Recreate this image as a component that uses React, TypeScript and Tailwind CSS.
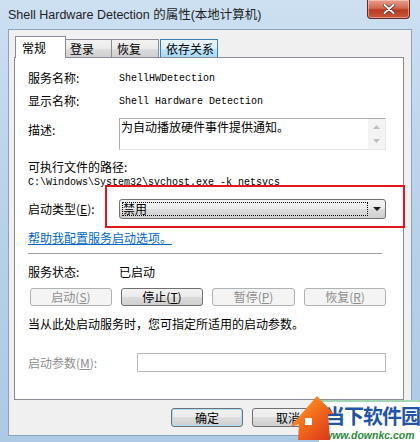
import React from "react";
import clsx from "clsx";

const btnNormal =
  "border-[#707070] bg-[linear-gradient(#f2f2f2_0%,#ebebeb_49%,#dddddd_50%,#cfcfcf_100%)] text-black";
const btnDisabled = "border-[#adb2b5] bg-[#f4f4f4] text-[#8d8d8d]";

const Btn = ({
  children,
  disabled,
  isDefault,
  className,
}: {
  children?: React.ReactNode;
  disabled?: boolean;
  isDefault?: boolean;
  className?: string;
}) => (
  <div
    className={clsx(
      "flex items-center justify-center rounded-[3px] border text-[12px] leading-[16px]",
      disabled ? btnDisabled : btnNormal,
      isDefault &&
        "border-[#3c7fb1] shadow-[inset_0_0_0_1px_#a8e0fb] bg-[linear-gradient(#eef7fc_0%,#e6f2fa_49%,#d5e9f6_50%,#c6e0f2_100%)]",
      className
    )}
  >
    {children}
  </div>
);

const Label = ({ children, className }: { children: React.ReactNode; className?: string }) => (
  <div className={clsx("w-[91px] shrink-0 text-[12px] leading-[16px]", className)}>{children}</div>
);

const App = () => {
  return (
    <div className="relative flex h-[442px] w-[420px] flex-col overflow-hidden bg-[linear-gradient(180deg,#cde0f2_0%,#bcd4ec_35%,#aec9e6_100%)] font-['Noto_Sans_CJK_SC','Liberation_Sans',sans-serif] text-black">
      {/* title bar */}
      <div className="flex h-[29px] shrink-0 items-start">
        <div className="pl-[8px] pt-[7px] font-['Liberation_Sans','Noto_Sans_CJK_SC',sans-serif] text-[12.5px] leading-[16px] text-[#1e1e1e]">
          Shell Hardware Detection 的属性(本地计算机)
        </div>
        <div className="ml-auto mr-[10px] flex h-[19px] w-[43px] items-center justify-center rounded-b-[4px] border border-t-0 border-[#5e2a2a] bg-[linear-gradient(180deg,#e5a08f_0%,#d26a52_45%,#b83c22_55%,#c9573a_100%)] shadow-[inset_0_0_0_1px_rgba(255,220,210,0.5)]">
          <svg width="12" height="10" viewBox="0 0 12 10">
            <path d="M1.5 1 L10.5 9 M10.5 1 L1.5 9" stroke="#4a1a10" strokeWidth="3.2" strokeLinecap="round" />
            <path d="M1.5 1 L10.5 9 M10.5 1 L1.5 9" stroke="#ffffff" strokeWidth="2" strokeLinecap="round" />
          </svg>
        </div>
      </div>

      {/* client area */}
      <div className="mx-[8px] mb-[6px] flex flex-1 flex-col border border-[#8aa4c0] bg-[#f0f0f0] pt-[6px]">
        {/* tabs */}
        <div className="ml-[6px] flex h-[21px] items-end text-[12px] leading-[16px]">
          <div className="relative z-10 mb-[-1px] flex h-[22px] w-[51px] items-center border border-b-0 border-[#898c95] bg-white pl-[6px]">
            常规
          </div>
          <div className="flex h-[18px] w-[46px] items-center border border-l-0 border-b-0 border-[#898c95] bg-[linear-gradient(#f2f2f2_0%,#ebebeb_50%,#dddddd_51%,#cfcfcf_100%)] pl-[4px]">
            登录
          </div>
          <div className="flex h-[18px] w-[47px] items-center border border-l-0 border-b-0 border-[#898c95] bg-[linear-gradient(#f2f2f2_0%,#ebebeb_50%,#dddddd_51%,#cfcfcf_100%)] pl-[5px]">
            恢复
          </div>
          <div className="ml-[1px] flex h-[18px] w-[58px] items-center border border-b-0 border-[#3c7fb1] bg-[linear-gradient(#eaf6fd_0%,#d9f0fc_50%,#bee6fd_51%,#a7d9f5_100%)] pl-[5px]">
            依存关系
          </div>
        </div>

        {/* panel */}
        <div className="relative ml-[5px] flex h-[343px] w-[390px] flex-col border border-[#898c95] bg-white pl-[13px]">
          <div className="mt-[12px] flex h-[16px] items-center">
            <Label>服务名称:</Label>
            <div className="font-['Liberation_Mono',monospace] text-[10px]">ShellHWDetection</div>
          </div>
          <div className="mt-[7px] flex h-[16px] items-center">
            <Label>显示名称:</Label>
            <div className="font-['Liberation_Mono',monospace] text-[10px]">Shell Hardware Detection</div>
          </div>
          <div className="mt-[9px] flex items-start">
            <Label className="mt-[4px]">描述:</Label>
            <div className="flex h-[32px] w-[267px] border border-t-[#abadb3] border-l-[#abadb3] border-r-[#e3e9ef] border-b-[#e3e9ef]">
              <div className="flex-1 pl-[1px] text-[12px] leading-[15px]">为自动播放硬件事件提供通知。</div>
              <div className="flex w-[17px] flex-col items-center justify-between bg-[#f3f3f3] py-[6px]">
                <svg width="7" height="4" viewBox="0 0 7 4">
                  <path d="M0 4 L3.5 0 L7 4 Z" fill="#bfbfbf" />
                </svg>
                <svg width="7" height="4" viewBox="0 0 7 4">
                  <path d="M0 0 L3.5 4 L7 0 Z" fill="#bfbfbf" />
                </svg>
              </div>
            </div>
          </div>
          <div className="mt-[9px] h-[16px] text-[12px] leading-[16px]">可执行文件的路径:</div>
          <div className="h-[16px] font-['Liberation_Mono',monospace] text-[10px] leading-[16px]">
            C:\Windows\System32\svchost.exe -k netsvcs
          </div>
          <div className="mt-[8px] flex h-[20px] items-center">
            <Label>
              启动类型(<span className="underline">E</span>):
            </Label>
            <div className="flex h-[20px] w-[267px] items-center rounded-[3px] border border-[#707070] bg-[linear-gradient(#f2f2f2_0%,#ebebeb_49%,#dddddd_50%,#cfcfcf_100%)] pl-[2px]">
              <div className="flex h-[14px] w-[246px] items-center border border-dotted border-black text-[12px] leading-[14px]">
                禁用
              </div>
              <div className="flex flex-1 items-center justify-center">
                <svg width="8" height="4" viewBox="0 0 8 4">
                  <path d="M0 0 L8 0 L4 4 Z" fill="#1a1a1a" />
                </svg>
              </div>
            </div>
          </div>
          <div className="mt-[11px] h-[16px] text-[12px] leading-[16px] text-[#0066cc] underline">
            帮助我配置服务启动选项。
          </div>
          <div className="mt-[7px] h-px w-[354px] bg-[#a0a0a0]" />
          <div className="mt-[10px] flex h-[16px] items-center">
            <Label>服务状态:</Label>
            <div className="text-[12px] leading-[16px]">已启动</div>
          </div>
          <div className="ml-[2px] mt-[8px] flex gap-[9px]">
            <Btn disabled className="h-[18px] w-[82px]">
              启动(<span className="underline">S</span>)
            </Btn>
            <Btn className="h-[18px] w-[82px]">
              停止(<span className="underline">T</span>)
            </Btn>
            <Btn disabled className="h-[18px] w-[83px]">
              暂停(<span className="underline">P</span>)
            </Btn>
            <Btn disabled className="h-[18px] w-[82px]">
              恢复(<span className="underline">R</span>)
            </Btn>
          </div>
          <div className="mt-[10px] h-[16px] text-[12px] leading-[16px]">
            当从此处启动服务时，您可指定所适用的启动参数。
          </div>
          <div className="mt-[21px] flex h-[19px] items-center">
            <div className="w-[109px] shrink-0 text-[12px] leading-[16px] text-[#8d8d8d]">
              启动参数(<span className="underline">M</span>):
            </div>
            <div className="h-[19px] w-[249px] border border-[#b9b9b9] bg-white" />
          </div>

          {/* red annotation box */}
          <div className="absolute left-[90px] top-[127px] h-[43px] w-[300px] border-2 border-[#e3141e]" />
        </div>

        {/* bottom buttons (third one sits under the watermark) */}
        <div className="mr-[6px] mt-[8px] flex justify-end gap-[9px]">
          <Btn isDefault className="h-[19px] w-[72px]">
            确定
          </Btn>
          <Btn className="h-[19px] w-[72px]">取消</Btn>
          <Btn className="h-[19px] w-[72px]" />
        </div>
      </div>

      {/* watermark overlay */}
      <div className="absolute bottom-0 right-0 h-[42px] w-[103px] border-l-2 border-t-2 border-[#9fd6b4] bg-white">
        <div className="flex h-[27px] items-center justify-center pl-[6px] font-['Noto_Sans_CJK_SC',sans-serif] text-[20px] font-bold leading-[26px] tracking-[-1px] text-[#1f54a8] [text-shadow:0_0_2px_#ffffff]">
          当下软件园
        </div>
        <div className="pl-[5px] font-['Liberation_Sans',sans-serif] text-[10.5px] font-bold italic leading-[12px] text-[#2e8a3c]">
          www.downkc.com
        </div>
      </div>
      <svg className="absolute left-[286px] top-[394px]" width="50" height="48" viewBox="0 0 50 48">
        <defs>
          <linearGradient id="house" x1="0" y1="0" x2="1" y2="1">
            <stop offset="0" stopColor="#ffb02e" />
            <stop offset="0.5" stopColor="#f26a1b" />
            <stop offset="1" stopColor="#d8321a" />
          </linearGradient>
        </defs>
        <path d="M31 2 L48 20 L42 20 L44 46 L12 46 L13 30 L4 33 Z" fill="url(#house)" />
        <rect x="19" y="24" width="7" height="7" fill="#ffffff" />
      </svg>
    </div>
  );
};

export default App;
